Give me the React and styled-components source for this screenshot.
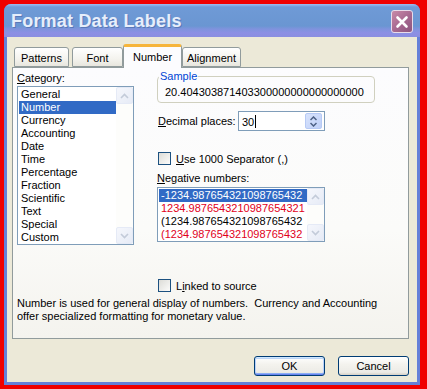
import React from 'react';
import styled, { createGlobalStyle } from 'styled-components';

const GlobalStyle = createGlobalStyle`
  html, body {
    margin: 0;
    padding: 0;
    background: #f00000;
  }
  body {
    font-family: "Liberation Sans", Arial, sans-serif;
    font-size: 11px;
    color: #000;
  }
`;

const Page = styled.div`
  width: 427px;
  height: 389px;
  box-sizing: border-box;
  padding: 4px 0 0 4px;
`;

const Window = styled.div`
  width: 416px;
  height: 381px;
  display: flex;
  flex-direction: column;
  border-radius: 7px 7px 0 0;
  overflow: hidden;
  background: #6580d8;
`;

const TitleBar = styled.div`
  height: 33px;
  flex: none;
  display: flex;
  align-items: center;
  justify-content: space-between;
  padding: 0 7px 0 7px;
  background:
    linear-gradient(to bottom, #9fbdf0 0, #6f9ad6 3px, #6a96d2 22px, #7f93dd 25px, #8c8fe4 29px, #8a8ee0 33px);
`;

const Title = styled.div`
  font-family: "Liberation Sans", Arial, sans-serif;
  font-weight: bold;
  font-size: 18px;
  color: #e6eefb;
  text-shadow: 1px 1px 0 #5a78b8;
  letter-spacing: 0.2px;
  padding-top: 1px;
`;

const CloseButton = styled.div`
  width: 22px;
  height: 23px;
  box-sizing: border-box;
  border: 1px solid #e8dcea;
  border-radius: 3px;
  background: linear-gradient(135deg, #c98aa8 0, #a5678f 55%, #8d567f 100%);
  display: flex;
  align-items: center;
  justify-content: center;
  margin-top: 2px;
`;

const Body = styled.div`
  flex: 1;
  margin: 0 3px 3px 3px;
  background: #ece9d8;
  display: flex;
  flex-direction: column;
  padding: 7px 8px 0 5px;
`;

const TabRow = styled.div`
  display: flex;
  align-items: flex-end;
  height: 23px;
  padding-left: 2px;
  position: relative;
  z-index: 1;
`;

const Tab = styled.div`
  width: ${p => p.$w}px;
  height: ${p => (p.$active ? 24 : 20)}px;
  margin-right: ${p => p.$gap || 0}px;
  margin-bottom: ${p => (p.$active ? -1 : 0)}px;
  box-sizing: border-box;
  border: 1px solid #919b9c;
  border-bottom: ${p => (p.$active ? 'none' : '1px solid #919b9c')};
  border-top: ${p => (p.$active ? '3px solid #f6b53c' : '1px solid #919b9c')};
  border-radius: 3px 3px 0 0;
  background: ${p => (p.$active ? '#fcfcfe' : 'linear-gradient(to bottom, #fff 0, #f4f3ee 60%, #e8e6de 100%)')};
  display: flex;
  align-items: ${p => (p.$active ? 'flex-start' : 'center')};
  justify-content: center;
  padding-top: ${p => (p.$active ? '4px' : '1px')};
  font-size: 11px;
`;

const Panel = styled.div`
  height: 272px;
  box-sizing: border-box;
  border: 1px solid #919b9c;
  background: linear-gradient(to bottom, #fcfcfe 0, #fbfbf9 60%, #f4f3ee 100%);
  padding: 3px 0 0 4px;
  display: flex;
  flex-direction: column;
`;

const TopGrid = styled.div`
  display: grid;
  grid-template-columns: 117px 218px;
  column-gap: 23px;
`;

const Column = styled.div`
  display: flex;
  flex-direction: column;
`;

const Label = styled.div`
  line-height: 14px;
  height: 14px;
  margin-top: ${p => p.$mt || 0}px;
  white-space: nowrap;
`;

const ListBox = styled.div`
  width: ${p => p.$w}px;
  height: ${p => p.$h}px;
  margin-top: ${p => p.$mt || 0}px;
  box-sizing: border-box;
  border: 1px solid #7f9db9;
  background: #fff;
  display: flex;
`;

const ListItems = styled.div`
  flex: 1;
  min-width: 0;
  padding: 1px 0 0 1px;
`;

const Item = styled.div`
  height: 13px;
  line-height: 13px;
  padding-left: 2px;
  white-space: nowrap;
  color: ${p => (p.$selected ? '#fff' : p.$red ? '#e1001b' : '#000')};
  background: ${p => (p.$selected ? '#316ac5' : 'transparent')};
`;

const ScrollBar = styled.div`
  width: 17px;
  flex: none;
  display: flex;
  flex-direction: column;
  justify-content: space-between;
  background: #fdfdfb;
`;

const ScrollButton = styled.div`
  width: 17px;
  height: 17px;
  box-sizing: border-box;
  border: 1px solid #e5eaf6;
  border-radius: 2px;
  background: linear-gradient(135deg, #f5f7fc, #e6ebf6);
  display: flex;
  align-items: center;
  justify-content: center;
`;

const SampleBox = styled.fieldset`
  margin: -1px 0 0 0;
  min-width: 0;
  box-sizing: border-box;
  width: 218px;
  border: 1px solid #d0d0bf;
  border-radius: 4px;
  padding: 3px 0 3px 7px;
`;

const Legend = styled.legend`
  color: #0046d5;
  padding: 0 1px;
  margin-left: -6px;
  line-height: 13px;
`;

const SampleValue = styled.div`
  line-height: 13px;
  white-space: nowrap;
`;

const FieldRow = styled.div`
  display: flex;
  align-items: center;
  height: 20px;
  margin-top: ${p => p.$mt || 0}px;
`;

const FieldLabel = styled.div`
  width: 80px;
  padding-left: 1px;
  white-space: nowrap;
`;

const NumberInput = styled.div`
  width: 87px;
  height: 20px;
  box-sizing: border-box;
  border: 1px solid #7f9db9;
  background: #fff;
  display: flex;
  align-items: center;
  justify-content: space-between;
  padding: 0 2px 0 3px;
`;

const Caret = styled.span`
  display: inline-block;
  width: 1px;
  height: 13px;
  background: #000;
  vertical-align: -2px;
  margin-left: 1px;
`;

const Spinner = styled.div`
  width: 17px;
  height: 16px;
  box-sizing: border-box;
  border: 1px solid #b7caf5;
  border-radius: 2px;
  background: linear-gradient(135deg, #d8e3fc, #bfd0f8);
  display: flex;
  flex-direction: column;
  align-items: center;
  justify-content: center;
  gap: 1px;
`;

const CheckRow = styled.label`
  display: flex;
  align-items: center;
  height: 13px;
  margin-top: ${p => p.$mt || 0}px;
  margin-left: ${p => p.$ml || 0}px;
  white-space: nowrap;
`;

const CheckBox = styled.span`
  width: 13px;
  height: 13px;
  box-sizing: border-box;
  border: 1px solid #1c5180;
  background: linear-gradient(135deg, #dcdcd7, #fcfcfb);
  margin-right: 5px;
  flex: none;
`;

const Description = styled.div`
  margin-top: 5px;
  line-height: 13px;
`;

const ButtonRow = styled.div`
  display: flex;
  justify-content: flex-end;
  gap: 13px;
  margin-top: 17px;
`;

const Button = styled.div`
  width: 71px;
  height: 20px;
  box-sizing: border-box;
  border: 1px solid #003c74;
  border-radius: 3px;
  background: linear-gradient(to bottom, #ffffff 0, #f4f3ee 40%, #ecebe6 85%, #d6d0c5 100%);
  box-shadow: ${p =>
    p.$default
      ? 'inset 0 1px 0 #cee7ff, inset 0 -1px 0 #6982ee, inset 1px 0 0 #b9d1fa, inset -1px 0 0 #b9d1fa, inset 0 2px 0 #bcd4f6, inset 0 -2px 0 #89adf4'
      : 'none'};
  display: flex;
  align-items: center;
  justify-content: center;
`;

const Arrow = ({ down, color = '#c3cbd9' }) => (
  <svg width="9" height="6" viewBox="0 0 9 6">
    <path
      d={down ? 'M1 1 L4.5 4.5 L8 1' : 'M1 5 L4.5 1.5 L8 5'}
      fill="none"
      stroke={color}
      strokeWidth="1.6"
    />
  </svg>
);

const SmallArrow = ({ down }) => (
  <svg width="7" height="5" viewBox="0 0 7 5">
    <path d={down ? 'M0.5 1 L3.5 4 L6.5 1' : 'M0.5 4 L3.5 1 L6.5 4'} fill="none" stroke="#4d6185" strokeWidth="1.5" />
  </svg>
);

const Scroll = () => (
  <ScrollBar>
    <ScrollButton><Arrow /></ScrollButton>
    <ScrollButton><Arrow down /></ScrollButton>
  </ScrollBar>
);

const categories = [
  'General', 'Number', 'Currency', 'Accounting', 'Date', 'Time',
  'Percentage', 'Fraction', 'Scientific', 'Text', 'Special', 'Custom',
];

const negatives = [
  { text: '-1234.987654321098765432', selected: true },
  { text: '1234.9876543210987654321', red: true },
  { text: '(1234.987654321098765432' },
  { text: '(1234.987654321098765432', red: true },
];

export default function App() {
  return (
    <>
      <GlobalStyle />
      <Page>
        <Window>
          <TitleBar>
            <Title>Format Data Labels</Title>
            <CloseButton>
              <svg width="14" height="14" viewBox="0 0 14 14">
                <path d="M2.5 2.5 L11.5 11.5 M11.5 2.5 L2.5 11.5" stroke="#fff" strokeWidth="2.6" strokeLinecap="round" />
              </svg>
            </CloseButton>
          </TitleBar>
          <Body>
            <TabRow>
              <Tab $w={55} $gap={3}>Patterns</Tab>
              <Tab $w={51}>Font</Tab>
              <Tab $w={59} $active>Number</Tab>
              <Tab $w={59}>Alignment</Tab>
            </TabRow>
            <Panel>
              <TopGrid>
                <Column>
                  <Label><u>C</u>ategory:</Label>
                  <ListBox $w={117} $h={159} $mt={1}>
                    <ListItems>
                      {categories.map(c => (
                        <Item key={c} $selected={c === 'Number'}>{c}</Item>
                      ))}
                    </ListItems>
                    <Scroll />
                  </ListBox>
                </Column>
                <Column>
                  <SampleBox>
                    <Legend>Sample</Legend>
                    <SampleValue>20.404303871403300000000000000000</SampleValue>
                  </SampleBox>
                  <FieldRow $mt={8}>
                    <FieldLabel><u>D</u>ecimal places:</FieldLabel>
                    <NumberInput>
                      <span>30<Caret /></span>
                      <Spinner>
                        <SmallArrow />
                        <SmallArrow down />
                      </Spinner>
                    </NumberInput>
                  </FieldRow>
                  <CheckRow $mt={21} $ml={1}>
                    <CheckBox />
                    <span><u>U</u>se 1000 Separator (,)</span>
                  </CheckRow>
                  <Label $mt={6}><u>N</u>egative numbers:</Label>
                  <ListBox $w={168} $h={55} $mt={2}>
                    <ListItems>
                      {negatives.map((n, i) => (
                        <Item key={i} $selected={n.selected} $red={n.red}>{n.text}</Item>
                      ))}
                    </ListItems>
                    <Scroll />
                  </ListBox>
                </Column>
              </TopGrid>
              <CheckRow $mt={34} $ml={141}>
                <CheckBox />
                <span>L<u>i</u>nked to source</span>
              </CheckRow>
              <Description>
                Number is used for general display of numbers.&nbsp; Currency and Accounting
                <br />
                offer specialized formatting for monetary value.
              </Description>
            </Panel>
            <ButtonRow>
              <Button $default>OK</Button>
              <Button>Cancel</Button>
            </ButtonRow>
          </Body>
        </Window>
      </Page>
    </>
  );
}
